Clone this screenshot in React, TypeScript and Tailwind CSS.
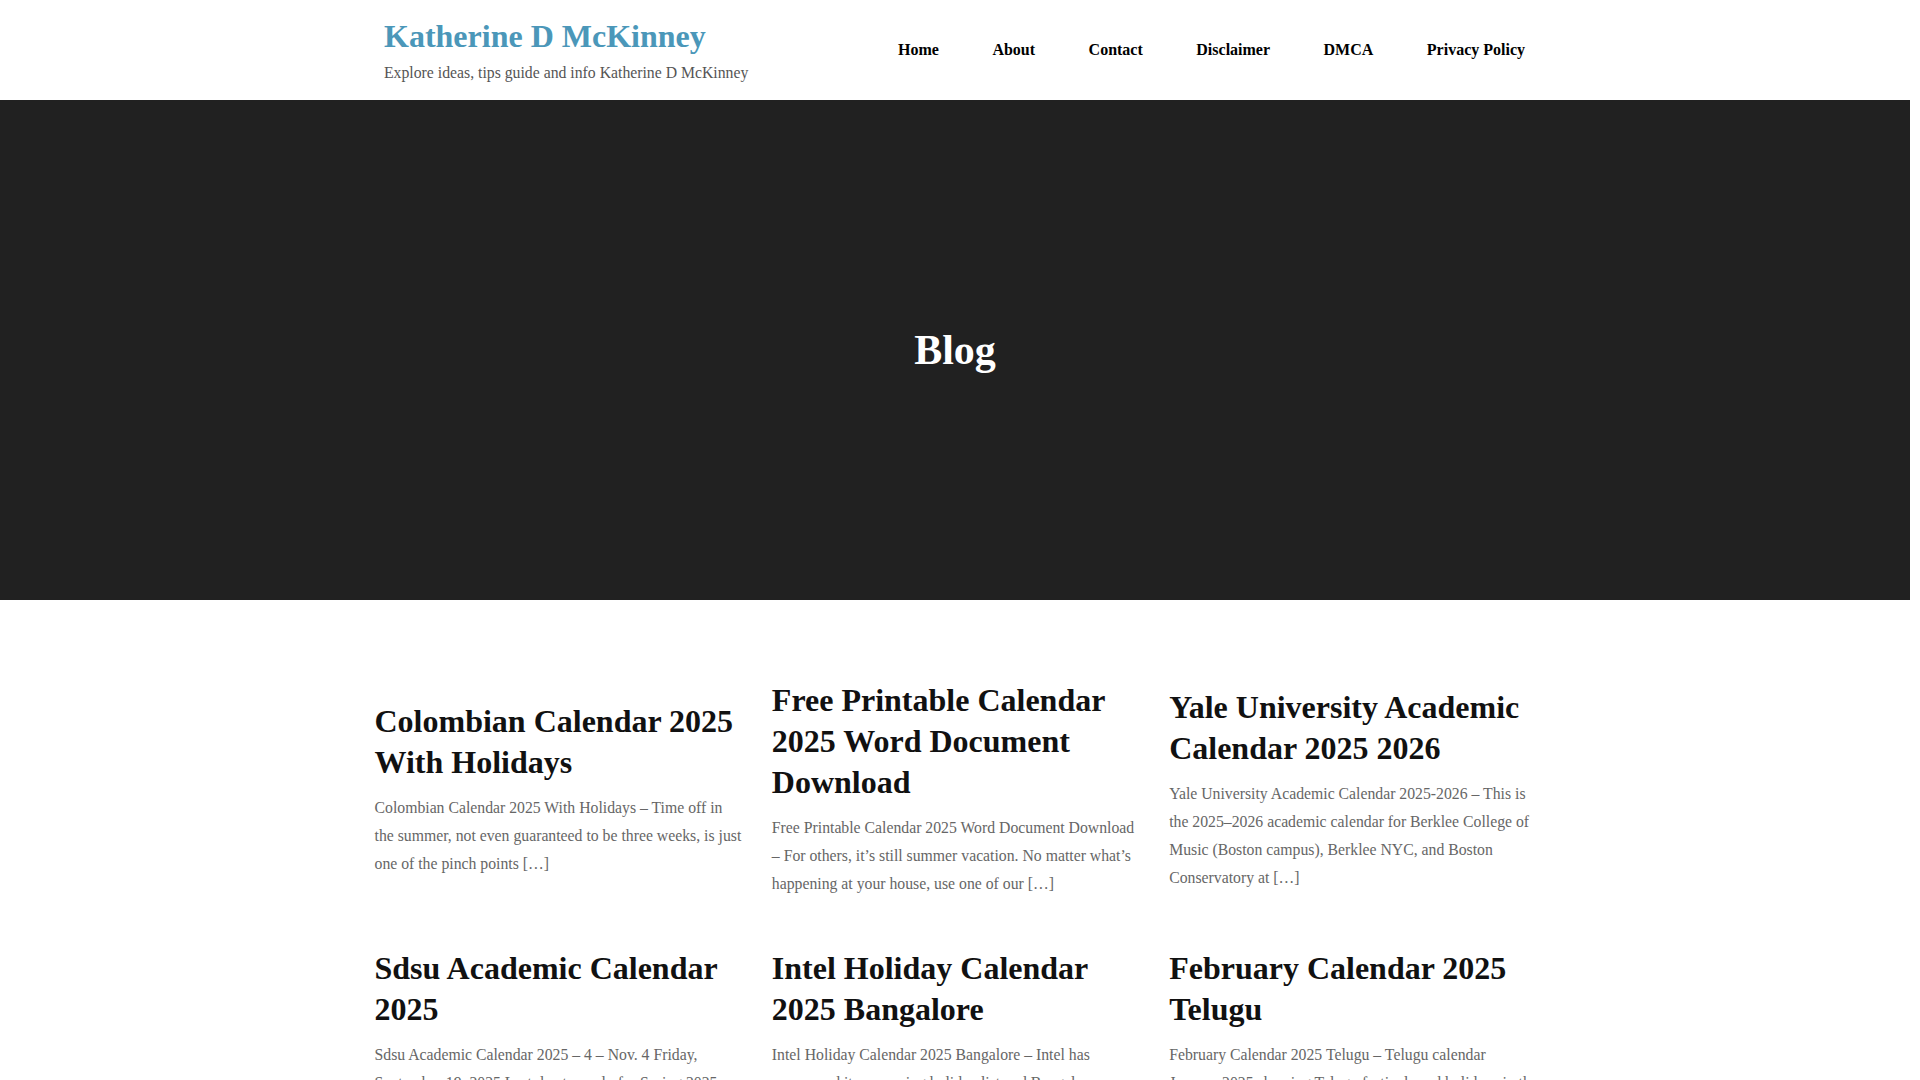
import React from "react";

const posts = [
  {
    title: "Colombian Calendar 2025 With Holidays",
    excerpt:
      "Colombian Calendar 2025 With Holidays – Time off in the summer, not even guaranteed to be three weeks, is just one of the pinch points […]",
  },
  {
    title: "Free Printable Calendar 2025 Word Document Download",
    excerpt:
      "Free Printable Calendar 2025 Word Document Download – For others, it’s still summer vacation. No matter what’s happening at your house, use one of our […]",
  },
  {
    title: "Yale University Academic Calendar 2025 2026",
    excerpt:
      "Yale University Academic Calendar 2025-2026 – This is the 2025–2026 academic calendar for Berklee College of Music (Boston campus), Berklee NYC, and Boston Conservatory at […]",
  },
  {
    title: "Sdsu Academic Calendar 2025",
    excerpt:
      "Sdsu Academic Calendar 2025 – 4 – Nov. 4 Friday, September 19, 2025 Last day to apply for Spring 2025 graduation and other deadlines […]",
  },
  {
    title: "Intel Holiday Calendar 2025 Bangalore",
    excerpt:
      "Intel Holiday Calendar 2025 Bangalore – Intel has announced its upcoming holiday list and Bangalore employees can plan their time off […]",
  },
  {
    title: "February Calendar 2025 Telugu",
    excerpt:
      "February Calendar 2025 Telugu – Telugu calendar January 2025 showing Telugu festivals and holidays in the month of February […]",
  },
];

const nav = ["Home", "About", "Contact", "Disclaimer", "DMCA", "Privacy Policy"];

export default function App() {
  return (
    <div className="min-h-screen bg-white">
      <div
        className="w-[calc(100%-10px)] bg-white text-black"
        style={{ fontFamily: '"Liberation Serif", "Times New Roman", serif' }}
      >
        <header className="h-[100px] bg-white">
          <div className="mx-auto flex h-full w-[1144px] items-start justify-between pl-[1px]">
            <div className="pt-[16px]">
              <a className="block text-[32px] font-bold leading-[40px] text-[#4b97b9]" href="#">
                Katherine D McKinney
              </a>
              <p className="mt-[5px] text-[15.75px] leading-[24px] text-[#555]">
                Explore ideas, tips guide and info Katherine D McKinney
              </p>
            </div>
            <nav className="flex h-full items-center gap-[53.5px] pr-[2px]">
              {nav.map((n) => (
                <a key={n} href="#" className="text-[16px] font-bold leading-[24px] text-black">
                  {n}
                </a>
              ))}
            </nav>
          </div>
        </header>

        <section className="flex h-[500px] items-center justify-center bg-[#212121]">
          <h1 className="text-[42px] font-bold leading-[50px] text-white">Blog</h1>
        </section>

        <main className="pt-[80px] pb-[60px]">
          <div className="mx-auto w-[1167px] pl-[3px]">
            <div className="grid grid-cols-3 items-center gap-x-[28px] gap-y-[50px]">
              {posts.map((p) => (
                <article key={p.title}>
                  <h2 className="mb-[11px] text-[32px] font-bold leading-[41px] text-[#111]">
                    <a href="#">{p.title}</a>
                  </h2>
                  <p className="text-[15.75px] leading-[28px] text-[#666]">{p.excerpt}</p>
                </article>
              ))}
            </div>
          </div>
        </main>
      </div>
    </div>
  );
}
